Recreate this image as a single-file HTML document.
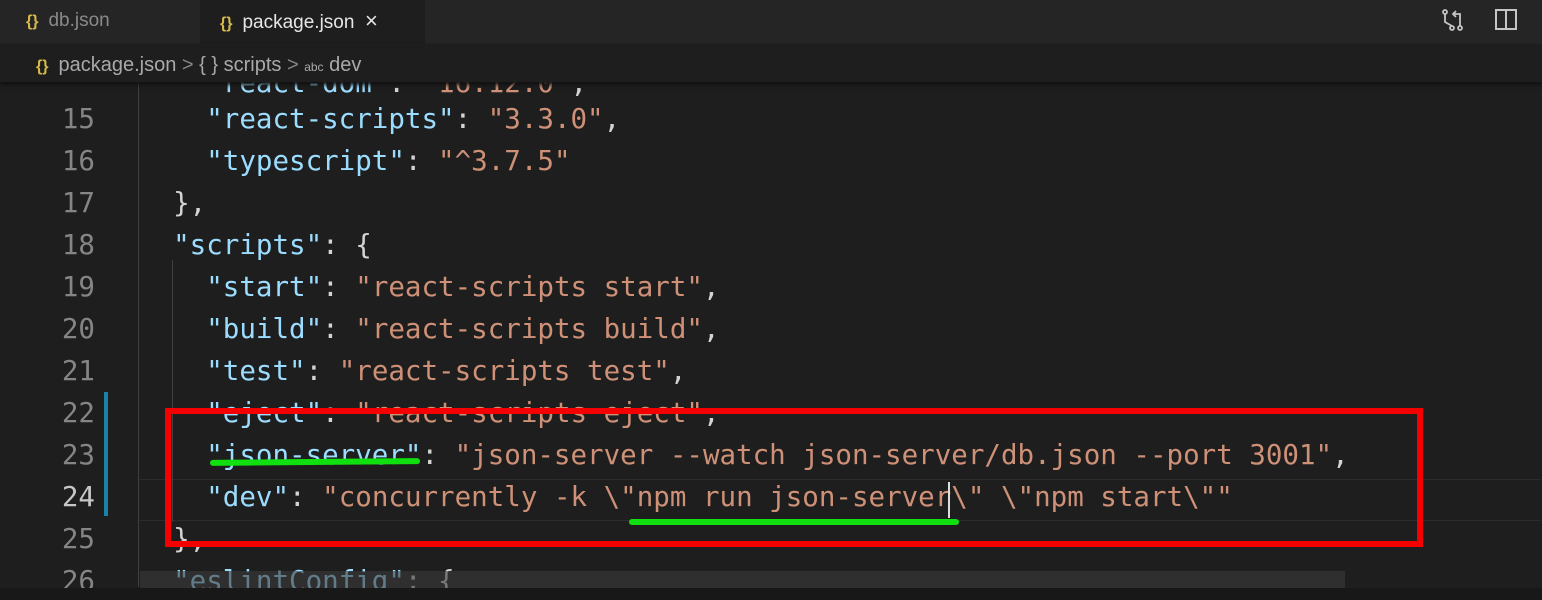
<!DOCTYPE html>
<html><head><meta charset="utf-8"><style>
*{margin:0;padding:0;box-sizing:border-box}
body{width:1542px;height:600px;background:#1e1e1e;overflow:hidden;position:relative;font-family:"Liberation Sans",sans-serif}
.tabs{position:absolute;left:0;top:0;width:1542px;height:44px;background:#252526}
.tab{position:absolute;top:0;height:44px;font-size:19px;line-height:42px;color:#8a8a8a}
.br{color:#d7ba4a;font-weight:bold;font-size:16px;margin-right:10px}
.crumb{position:absolute;top:44px;left:0;width:1542px;height:38px;background:#1e1e1e;color:#a9a9a9;font-size:20px;line-height:42px;padding-left:36px;box-shadow:0 3px 4px #111}
.code{position:absolute;left:0;top:3px;font-family:"DejaVu Sans Mono","Liberation Mono",monospace;font-size:27.5px;white-space:pre}
.ln{position:absolute;width:95px;text-align:right;color:#858585}
.tx{position:absolute;left:140px;color:#d4d4d4}
.k{color:#9cdcfe}.s{color:#ce9178}
</style></head><body>
<div class="code">
<div class="tx" style="top:64px"><span class="k">    "react-dom"</span>: <span class="s">"16.12.0"</span>,</div>
<div class="ln" style="top:100px">15</div><div class="tx" style="top:100px">    <span class="k">"react-scripts"</span>: <span class="s">"3.3.0"</span>,</div>
<div class="ln" style="top:142px">16</div><div class="tx" style="top:142px">    <span class="k">"typescript"</span>: <span class="s">"^3.7.5"</span></div>
<div class="ln" style="top:184px">17</div><div class="tx" style="top:184px">  },</div>
<div class="ln" style="top:226px">18</div><div class="tx" style="top:226px">  <span class="k">"scripts"</span>: {</div>
<div class="ln" style="top:268px">19</div><div class="tx" style="top:268px">    <span class="k">"start"</span>: <span class="s">"react-scripts start"</span>,</div>
<div class="ln" style="top:310px">20</div><div class="tx" style="top:310px">    <span class="k">"build"</span>: <span class="s">"react-scripts build"</span>,</div>
<div class="ln" style="top:352px">21</div><div class="tx" style="top:352px">    <span class="k">"test"</span>: <span class="s">"react-scripts test"</span>,</div>
<div class="ln" style="top:394px">22</div><div class="tx" style="top:394px">    <span class="k">"eject"</span>: <span class="s">"react-scripts eject"</span>,</div>
<div class="ln" style="top:436px">23</div><div class="tx" style="top:436px">    <span class="k">"json-server"</span>: <span class="s">"json-server --watch json-server/db.json --port 3001"</span>,</div>
<div style="position:absolute;left:140px;top:476px;width:1400px;height:42px;border-top:1px solid #2c2c2c;border-bottom:1px solid #2c2c2c"></div>
<div class="ln" style="top:478px;color:#c6c6c6">24</div><div class="tx" style="top:478px">    <span class="k">"dev"</span>: <span class="s">"concurrently -k \"npm run json-server\" \"npm start\""</span></div>
<div class="ln" style="top:520px">25</div><div class="tx" style="top:520px">  },</div>
<div class="ln" style="top:562px">26</div><div class="tx" style="top:562px">  <span class="k">"eslintConfig"</span>: {</div>
</div>
<div style="position:absolute;left:140px;top:571px;width:1205px;height:17px;background:#3a3a3a;opacity:.6"></div>
<div style="position:absolute;left:138px;top:82px;width:1px;height:505px;background:#404040"></div>
<div style="position:absolute;left:172px;top:260px;width:1px;height:262px;background:#404040"></div>
<div style="position:absolute;left:104px;top:392px;width:4px;height:124px;background:#1b81a8"></div>
<div style="position:absolute;left:0;top:588px;width:1542px;height:12px;background:#181818"></div>
<div style="position:absolute;left:948px;top:482px;width:2px;height:36px;background:#ddd"></div>
<div class="tabs">
<div class="tab" style="left:0;width:200px;padding-left:26px"><span class="br">{}</span>db.json</div>
<div class="tab" style="left:200px;width:225px;background:#1e1e1e;color:#e6e6e6;padding-left:20px"><span class="br">{}</span>package.json&nbsp; <span style="font-size:22px">×</span></div>
<svg style="position:absolute;left:1440px;top:8px" width="26" height="24" viewBox="0 0 26 24" fill="none" stroke="#c5c5c5" stroke-width="1.8"><circle cx="5" cy="4" r="2"/><circle cx="12" cy="20" r="2"/><circle cx="20" cy="20" r="2"/><path d="M5 6v8l7 4M20 18V6h-6M16 3l-3 3 3 3"/></svg>
<svg style="position:absolute;left:1494px;top:9px" width="24" height="22" viewBox="0 0 24 22" fill="none" stroke="#c5c5c5" stroke-width="2"><rect x="2" y="1" width="20" height="19"/><path d="M12 1v19"/></svg>
</div>
<div class="crumb"><span class="br">{}</span>package.json <span style="color:#888">&gt;</span> { } scripts <span style="color:#888">&gt;</span> <span style="font-size:12px">abc</span> dev</div>
<div style="position:absolute;left:165px;top:408px;width:1258px;height:139px;border:6px solid #f40000"></div>
<div style="position:absolute;left:210px;top:459px;width:210px;height:6px;background:#10e010;border-radius:3px;transform:rotate(-0.5deg)"></div>
<div style="position:absolute;left:629px;top:519px;width:330px;height:6px;background:#10e010;border-radius:3px"></div>
</body></html>
